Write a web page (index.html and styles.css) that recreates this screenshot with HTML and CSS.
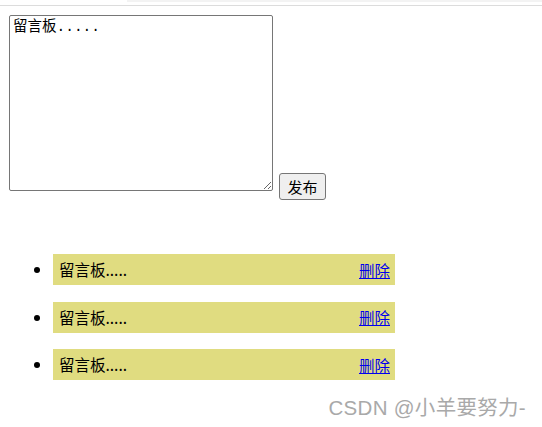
FILE: index.html
```html
<!DOCTYPE html>
<html lang="zh">
<head>
<meta charset="utf-8">
<title>留言板</title>
<link rel="stylesheet" href="styles.css">
</head>
<body>
<div class="topbar"><div class="tab-strip"></div></div>
<div class="page">
  <div class="form-row">
    <textarea class="msg-input">留言板.....</textarea>
    <button class="publish">发布</button>
  </div>
  <ul class="msg-list">
    <li class="msg-item"><div class="msg-row"><span class="msg-text">留言板.....</span><a class="del" href="javascript:;">删除</a></div></li>
    <li class="msg-item"><div class="msg-row"><span class="msg-text">留言板.....</span><a class="del" href="javascript:;">删除</a></div></li>
    <li class="msg-item"><div class="msg-row"><span class="msg-text">留言板.....</span><a class="del" href="javascript:;">删除</a></div></li>
  </ul>
</div>
<div class="watermark">CSDN @小羊要努力-</div>
</body>
</html>
```

FILE: styles.css
```css
html, body {
  margin: 0;
  padding: 0;
  background: #fff;
}
body {
  font-family: "Liberation Sans", "Noto Sans CJK SC", sans-serif;
  font-size: 16px;
  color: #000;
  width: 542px;
  height: 427px;
  position: relative;
  overflow: hidden;
}
.topbar {
  height: 5px;
  border-bottom: 1px solid #dcdcdc;
  display: flex;
  justify-content: flex-end;
}
.tab-strip {
  width: 415px;
  height: 2px;
  background: #f3f3f3;
}
.page {
  padding: 9px 0 0 9px;
}
.form-row {
  display: flex;
  align-items: flex-end;
  gap: 6px;
}
.msg-input {
  box-sizing: border-box;
  width: 264px;
  height: 176px;
  margin: 0;
  padding: 2px 3px;
  border: 1px solid #767676;
  border-radius: 2px;
  font-family: "Liberation Mono", "Noto Sans CJK SC", monospace;
  font-size: 14.5px;
  line-height: 18px;
  color: #000;
  resize: both;
}
.publish {
  box-sizing: border-box;
  width: 47px;
  height: 27px;
  margin: 0 0 -9px 0;
  padding: 0;
  font-family: "Noto Sans CJK SC", sans-serif;
  font-size: 15px;
  color: #000;
  background: #efefef;
  border: 1px solid #767676;
  border-radius: 3px;
}
.msg-list {
  margin: 63px 0 0 0;
  padding: 0 0 0 44px;
  width: 342px;
}
.msg-item {
  margin-bottom: 16.5px;
  font-family: "Noto Sans CJK SC", sans-serif;
  font-size: 15.5px;
}
.msg-row {
  display: flex;
  justify-content: space-between;
  align-items: center;
  height: 31px;
  padding: 0 5px 0 6px;
  background: #e0dc80;
}
.msg-text {
  line-height: 31px;
}
.del {
  color: #0000ee;
  text-decoration: underline;
}
.watermark {
  position: absolute;
  right: 16px;
  bottom: 6px;
  font-family: "Liberation Sans", "Noto Sans CJK SC", sans-serif;
  font-size: 20.5px;
  letter-spacing: 0.3px;
  color: #a9a9a9;
  text-shadow: 0 0 1px #fff;
}
```
